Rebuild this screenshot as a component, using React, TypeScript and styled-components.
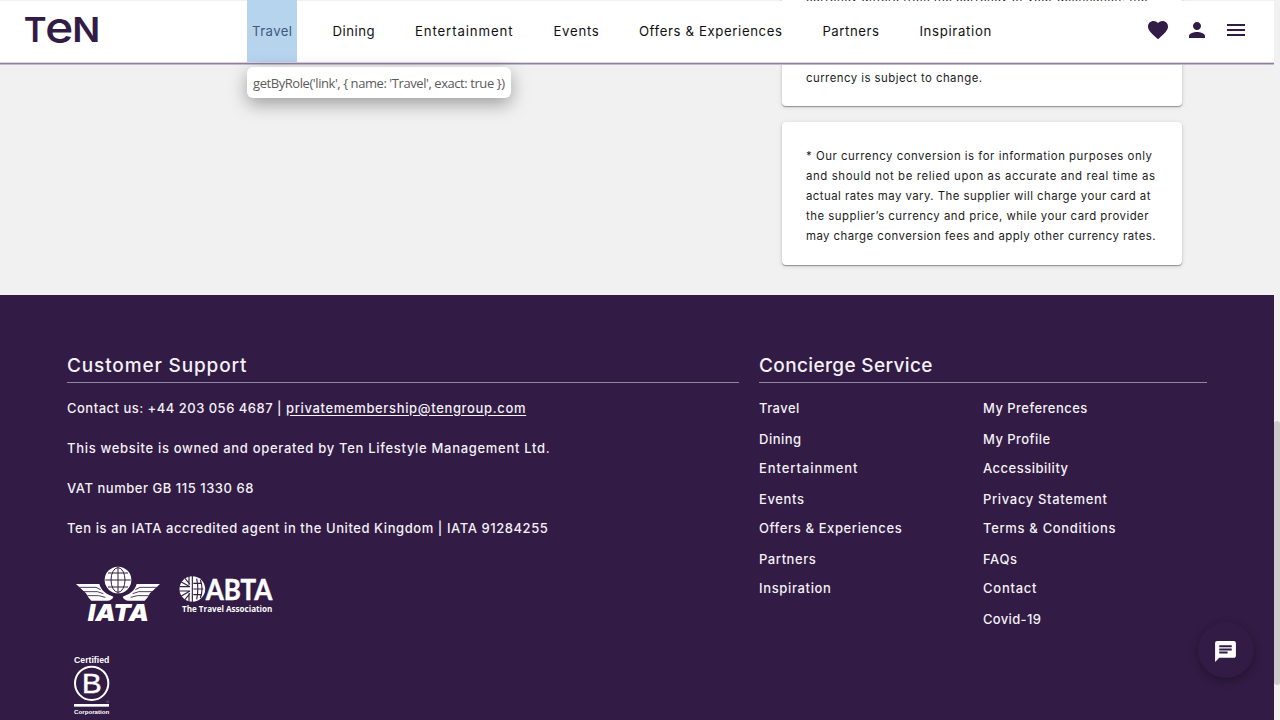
import React from 'react';
import styled, { createGlobalStyle } from 'styled-components';

const PURPLE = '#321b44';

const GlobalStyle = createGlobalStyle`
  * { box-sizing: border-box; }
  html, body { margin: 0; padding: 0; overflow: hidden; }
  body { background: #f1f1f1; font-family: Inter, 'Liberation Sans', sans-serif; }
  a { color: inherit; text-decoration: none; }
`;

const Frame = styled.div`
  display: flex;
  width: 1280px;
  height: 720px;
  overflow: hidden;
  background: #f1f1f1;
`;

const Page = styled.div`
  position: relative;
  width: 1274px;
  height: 720px;
  overflow: hidden;
`;

const ScrollTrack = styled.div`
  width: 6px;
  height: 720px;
  padding-top: 421px;
  background: #f1f1f1;
`;

const ScrollThumb = styled.div`
  height: 264px;
  border-radius: 3px;
  background: #cdcdcd;
`;

const Header = styled.header`
  position: absolute;
  z-index: 2;
  top: 1px;
  left: 0;
  width: 1274px;
  height: 63px;
  display: flex;
  align-items: stretch;
  background: #fff;
  border-bottom: 1px solid #8f80a4;
  box-shadow: inset 0 -1px #d9d3e0, 0 1px #c3bbcb;
`;

const LogoLink = styled.a`
  width: 247px;
  padding: 12px 0 0 20px;
  svg { display: block; overflow: visible; }
`;

const Nav = styled.nav`
  display: flex;
  flex: 1;
`;

const NavLink = styled.a<{ $width: number; $track: number; $active?: boolean }>`
  width: ${(p) => p.$width}px;
  height: 62px;
  margin-top: -1px;
  margin-right: ${(p) => (p.$active ? 30.2 : 0)}px;
  padding-left: 5px;
  line-height: 63px;
  font-size: 13.2px;
  letter-spacing: ${(p) => p.$track - 0.1}px;
  white-space: nowrap;
  color: ${(p) => (p.$active ? '#41597b' : '#111')};
  background: ${(p) => (p.$active ? '#b7d4ee' : 'transparent')};
`;

const Actions = styled.div`
  display: flex;
  align-items: center;
  gap: 15px;
  padding: 0 26px 4px 0;
  color: ${PURPLE};
  svg { display: block; fill: currentColor; }
`;

const Tooltip = styled.div`
  position: absolute;
  z-index: 3;
  top: 67px;
  left: 247px;
  width: 264px;
  height: 31px;
  padding-left: 6px;
  border-radius: 6px;
  background: #fff;
  box-shadow: 0 6px 18px rgba(0, 0, 0, 0.35);
  color: #5c5c5c;
  font: 13px/33px 'Open Sans', sans-serif;
  letter-spacing: -0.43px;
  white-space: nowrap;
`;

const Aside = styled.aside`
  display: flex;
  flex-direction: column;
  gap: 16px;
  width: 400px;
  height: 294px;
  margin-left: 781.5px;
`;

const Card = styled.section<{ $height: number; $top: number }>`
  flex: none;
  height: ${(p) => p.$height}px;
  padding: ${(p) => p.$top}px 0 0 24.5px;
  border-radius: 4px;
  background: #fff;
  box-shadow: 0 1px 1px rgba(0, 0, 0, 0.35), 0 1px 5px rgba(0, 0, 0, 0.14);
  color: #1c1c1c;
`;

const Line = styled.div<{ $track: number }>`
  height: 20px;
  line-height: 20px;
  font-size: 11.4px;
  letter-spacing: ${(p) => p.$track - 0.105}px;
  white-space: nowrap;
`;

const ScrolledCard = styled(Card)`
  display: flex;
  flex-direction: column;
  gap: 60px;
  margin-top: -24px;
  border-radius: 0 0 4px 4px;
`;

const Footer = styled.footer`
  display: flex;
  gap: 20px;
  height: 426px;
  padding: 58px 67px 0;
  margin-top: 0.5px;
  background: ${PURPLE};
  color: #f4f1f6;
`;

const Column = styled.div<{ $width: number }>`
  width: ${(p) => p.$width}px;
`;

const Heading = styled.h2<{ $track: number }>`
  margin: 0;
  height: 30px;
  border-bottom: 1px solid #9385a0;
  font-size: 19px;
  font-weight: 500;
  line-height: 26px;
  letter-spacing: ${(p) => p.$track}px;
`;

const Info = styled.p<{ $track: number }>`
  margin: 0;
  height: 40px;
  font-size: 13px;
  font-weight: 500;
  line-height: 20px;
  letter-spacing: ${(p) => p.$track}px;
  white-space: nowrap;
`;

const InfoList = styled.div`
  padding-top: 15px;
`;

const Mail = styled.a<{ $track: number }>`
  letter-spacing: ${(p) => p.$track}px;
  text-decoration: underline;
  text-underline-offset: 2px;
`;

const Links = styled.div`
  display: flex;
  padding-top: 15px;
`;

const LinkList = styled.ul`
  width: 224px;
  margin: 0;
  padding: 0;
  list-style: none;
  font-size: 13px;
  font-weight: 500;
  line-height: 20px;
`;

const LinkItem = styled.li<{ $track: number }>`
  height: 31px;
  letter-spacing: ${(p) => p.$track}px;
  white-space: nowrap;
  &:nth-child(even) { height: 29px; }
`;

const Badges = styled.div`
  display: flex;
  flex-wrap: wrap;
  column-gap: 12px;
  row-gap: 30px;
  width: 230px;
  margin-top: 4px;
  padding-left: 3px;
  svg { display: block; overflow: visible; }
`;

const Chat = styled.button`
  position: absolute;
  z-index: 2;
  left: 1197.5px;
  top: 622px;
  width: 56px;
  height: 56px;
  display: grid;
  place-items: center;
  padding: 2px 0 0;
  border: 0;
  border-radius: 50%;
  background: ${PURPLE};
  box-shadow: 0 3px 8px rgba(0, 0, 0, 0.3);
`;

const TenLogo = () => (
  <svg width="84" height="34" viewBox="20 13 84 34" fill={PURPLE} fontFamily="Inter, sans-serif" fontWeight="600">
    <text x="23.8" y="42" fontSize="34.4" textLength="22.8" lengthAdjust="spacingAndGlyphs">T</text>
    <text x="45" y="42.7" fontSize="44.5" fontWeight="500" textLength="28.4" lengthAdjust="spacingAndGlyphs">e</text>
    <text x="72.2" y="42" fontSize="34.4" textLength="28" lengthAdjust="spacingAndGlyphs">N</text>
  </svg>
);

const Wing = () => (
  <g>
    <path d="M48 102H118C124 124 142 134 160 140Q156 151 142 152H94L86 143L78 130L64 117Z" />
    <g stroke={PURPLE} strokeWidth="2.6" fill="none">
      <path d="M58 112H108L122 119M70 125H112L130 131M82 137H116L136 142" />
    </g>
  </g>
);

const IataLogo = () => (
  <svg width="96" height="62" viewBox="30 36 288 186" fill="#fff">
    <Wing />
    <g transform="translate(348 0) scale(-1 1)"><Wing /></g>
    <circle cx="174" cy="90" r="43" fill={PURPLE} />
    <circle cx="174" cy="90" r="40" />
    <g stroke={PURPLE} strokeWidth="3" fill="none">
      <path d="M174 52V128M136 90H212M144 69H204M144 111H204" />
      <ellipse cx="174" cy="90" rx="21" ry="37" />
    </g>
    <text x="83" y="214" fontFamily="Inter, sans-serif" fontWeight="900" fontStyle="italic" fontSize="70" textLength="184" lengthAdjust="spacingAndGlyphs">IATA</text>
  </svg>
);

const AbtaLogo = () => (
  <svg width="98" height="62" viewBox="354 36 294 186" fill="#fff">
    <circle cx="397" cy="117" r="38.5" />
    <g stroke={PURPLE} strokeWidth="3.4" fill="none">
      <path d="M397 78V156M358 110H390M358 123H390M364 96L390 110M374 84L390 103M364 138L390 123M374 150L390 130M387 78V104M387 156V130" />
      <path d="M400 100H426M400 117H430M400 134H426M410 86Q417 117 410 148M421 90Q431 117 421 144" />
    </g>
    <text x="437" y="150" fontFamily="Lato, sans-serif" fontWeight="700" fontSize="86" textLength="200" lengthAdjust="spacingAndGlyphs" stroke="#fff" strokeWidth="1.5">ABTA</text>
    <text x="366" y="185" fontFamily="'Open Sans', sans-serif" fontWeight="700" fontSize="24" textLength="271" lengthAdjust="spacingAndGlyphs">The Travel Association</text>
  </svg>
);

const BCorpLogo = () => (
  <svg width="42" height="64" viewBox="30 312 126 192" fill="#fff" fontFamily="'Liberation Sans', sans-serif">
    <text x="42" y="338" fontWeight="700" fontSize="25" textLength="106" lengthAdjust="spacingAndGlyphs">Certified</text>
    <circle cx="95" cy="400" r="50" fill="none" stroke="#fff" strokeWidth="6" />
    <text x="66" y="429" fontSize="84" textLength="59" lengthAdjust="spacingAndGlyphs" stroke="#fff" strokeWidth="1.5">B</text>
    <circle cx="143" cy="455" r="3" fill="none" stroke="#fff" opacity=".6" />
    <rect x="42" y="462" width="105" height="8" />
    <text x="42" y="491" fontWeight="700" fontSize="18" textLength="106" lengthAdjust="spacingAndGlyphs">Corporation</text>
  </svg>
);

const navItems: [string, number, number][] = [
  ['Travel', 50.2, 0.5],
  ['Dining', 82.5, 0.62],
  ['Entertainment', 138.5, 1],
  ['Events', 85.5, 0.85],
  ['Offers & Experiences', 183.5, 0.72],
  ['Partners', 97, 0.65],
  ['Inspiration', 90, 0.78],
];

const services: [string, number][] = [
  ['Travel', 0.45],
  ['Dining', 0.5],
  ['Entertainment', 0.93],
  ['Events', 0.62],
  ['Offers & Experiences', 0.62],
  ['Partners', 0.57],
  ['Inspiration', 0.65],
];

const account: [string, number][] = [
  ['My Preferences', 0.46],
  ['My Profile', 0.45],
  ['Accessibility', 0.5],
  ['Privacy Statement', 0.66],
  ['Terms & Conditions', 0.67],
  ['FAQs', 0.6],
  ['Contact', 0.75],
  ['Covid-19', 0.33],
];

const notice: [string, number][] = [
  ['* Our currency conversion is for information purposes only', 0.62],
  ['and should not be relied upon as accurate and real time as', 0.71],
  ['actual rates may vary. The supplier will charge your card at', 0.56],
  ['the supplier’s currency and price, while your card provider', 0.6],
  ['may charge conversion fees and apply other currency rates.', 0.55],
];

export default function App() {
  return (
    <Frame>
      <GlobalStyle />
      <Page>
        <Header>
          <LogoLink href="#"><TenLogo /></LogoLink>
          <Nav>
            {navItems.map(([label, width, track], i) => (
              <NavLink key={label} href="#" $width={width} $track={track} $active={i === 0}>{label}</NavLink>
            ))}
          </Nav>
          <Actions>
            <svg width="24" height="24" viewBox="0 0 24 24"><path d="M12 21.35l-1.45-1.32C5.4 15.36 2 12.28 2 8.5 2 5.42 4.42 3 7.5 3c1.74 0 3.41.81 4.5 2.09C13.09 3.81 14.76 3 16.5 3 19.58 3 22 5.42 22 8.5c0 3.78-3.4 6.86-8.55 11.54L12 21.35z" /></svg>
            <svg width="24" height="24" viewBox="0 0 24 24"><path d="M12 12c2.21 0 4-1.79 4-4s-1.79-4-4-4-4 1.79-4 4 1.79 4 4 4zm0 2c-2.67 0-8 1.34-8 4v2h16v-2c0-2.66-5.33-4-8-4z" /></svg>
            <svg width="24" height="24" viewBox="0 0 24 24"><path d="M3 18h18v-2H3v2zm0-5h18v-2H3v2zm0-7v2h18V6H3z" /></svg>
          </Actions>
        </Header>
        <Tooltip>{"getByRole('link', { name: 'Travel', exact: true })"}</Tooltip>
        <Aside>
          <ScrolledCard $height={130} $top={12}>
            <Line $track={0.6}>currency differs from the currency of your destination, the</Line>
            <Line $track={0.57}>currency is subject to change.</Line>
          </ScrolledCard>
          <Card $height={143} $top={24}>
            {notice.map(([text, track]) => <Line key={text} $track={track}>{text}</Line>)}
          </Card>
        </Aside>
        <Footer>
          <Column $width={672}>
            <Heading $track={0.86}>Customer Support</Heading>
            <InfoList>
              <Info $track={0.49}>Contact us: +44 203 056 4687 | <Mail href="#" $track={0.65}>privatemembership@tengroup.com</Mail></Info>
              <Info $track={0.69}>This website is owned and operated by Ten Lifestyle Management Ltd.</Info>
              <Info $track={0.53}>VAT number GB 115 1330 68</Info>
              <Info $track={0.57}>Ten is an IATA accredited agent in the United Kingdom | IATA 91284255</Info>
            </InfoList>
            <Badges>
              <IataLogo />
              <AbtaLogo />
              <BCorpLogo />
            </Badges>
          </Column>
          <Column $width={448}>
            <Heading $track={0.36}>Concierge Service</Heading>
            <Links>
              <LinkList>{services.map(([t, k]) => <LinkItem key={t} $track={k}><a href="#">{t}</a></LinkItem>)}</LinkList>
              <LinkList>{account.map(([t, k]) => <LinkItem key={t} $track={k}><a href="#">{t}</a></LinkItem>)}</LinkList>
            </Links>
          </Column>
        </Footer>
        <Chat aria-label="Chat">
          <svg width="25" height="25" viewBox="0 0 24 24" fill="#fff"><path d="M20 2H4c-1.1 0-1.99.9-1.99 2L2 22l4-4h14c1.1 0 2-.9 2-2V4c0-1.1-.9-2-2-2zM6 9h12v2H6V9zm8 5H6v-2h8v2zm4-6H6V6h12v2z" /></svg>
        </Chat>
      </Page>
      <ScrollTrack><ScrollThumb /></ScrollTrack>
    </Frame>
  );
}
